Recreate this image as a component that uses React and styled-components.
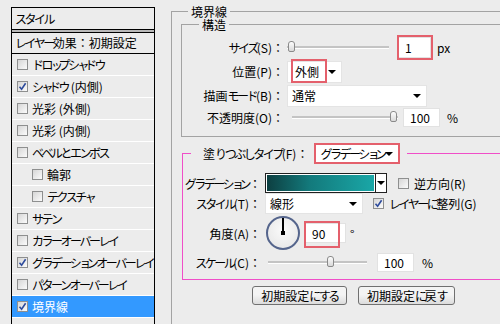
import React from "react";
import styled, { createGlobalStyle } from "styled-components";

const GlobalStyle = createGlobalStyle`
  body {
    margin: 0;
    background: #ececec;
    font-family: "Noto Sans CJK JP", "Noto Sans", sans-serif;
    font-size: 12px;
    color: #000;
  }
`;

const Screen = styled.div`
  display: flex;
  width: 500px;
  height: 324px;
  overflow: hidden;
  background: #ececec;
`;

// the UI font packs kana tighter than full-width CJK fonts do
const Kana = styled.span`
  letter-spacing: ${({ $small }) => ($small ? -4.5 : -2.5)}px;
`;

const SMALL = "ぁぃぅぇぉっゃゅょァィゥェォッャュョ";
const kindOf = (ch) =>
  SMALL.includes(ch) ? "small" : /[ぁ-んァ-ヶー]/.test(ch) ? "kana" : "other";

function Jp({ children }) {
  const runs = [];
  for (const ch of String(children)) {
    const k = kindOf(ch);
    const last = runs[runs.length - 1];
    if (last && last.k === k) last.t += ch;
    else runs.push({ k, t: ch });
  }
  return runs.map((r, i) =>
    r.k === "other" ? (
      <React.Fragment key={i}>{r.t}</React.Fragment>
    ) : (
      <Kana key={i} $small={r.k === "small"}>
        {r.t}
      </Kana>
    )
  );
}

/* ---------- left: style list ---------- */

const StylePanel = styled.div`
  flex: none;
  width: 142px;
  margin: 7px 0 0 11px;
  border: 1px solid #000;
  border-bottom: none;
  display: flex;
  flex-direction: column;
`;

const PanelTitle = styled.div`
  height: 21px;
  line-height: 21px;
  padding-left: 3px;
  border-bottom: 1px solid #000;
`;

const TitleGap = styled.div`
  height: 2px;
  background: #b9b9b9;
  border-bottom: 1px solid #000;
`;

const Preset = styled.div`
  height: 20px;
  line-height: 20px;
  padding-left: 3px;
  border-bottom: 1px solid #000;
`;

const EffectRow = styled.div`
  display: flex;
  align-items: center;
  gap: 4px;
  height: 21px;
  padding-left: ${({ $indent }) => ($indent ? 20 : 5)}px;
  border-bottom: 1px solid #fff;
  background: ${({ $active }) => ($active ? "#3399ff" : "transparent")};
  color: ${({ $active }) => ($active ? "#fff" : "#000")};
  white-space: nowrap;
  overflow: hidden;
`;

/* ---------- common controls ---------- */

const Box = styled.span`
  flex: none;
  display: inline-flex;
  align-items: center;
  justify-content: center;
  width: 11px;
  height: 11px;
  box-sizing: border-box;
  border: 1px solid #8e8f8f;
  background: linear-gradient(135deg, #d6d6d6, #fbfbfb);
`;

function Checkbox({ checked }) {
  return (
    <Box>
      {checked && (
        <svg width="9" height="9" viewBox="0 0 9 9">
          <path d="M1.5 4.8 L3.6 7.2 L7.6 1.2" stroke="#2d4b9c" strokeWidth="1.6" fill="none" />
        </svg>
      )}
    </Box>
  );
}

const Track = styled.div`
  flex: none;
  position: relative;
  width: ${({ $w }) => $w}px;
  height: 2px;
  background: #c4c4c4;
  border-bottom: 1px solid #fff;
`;

const Thumb = styled.span`
  position: absolute;
  top: -5px;
  left: ${({ $at }) => $at}px;
  width: 7px;
  height: 11px;
  box-sizing: border-box;
  border: 1px solid #8a8a8a;
  border-radius: 3px 3px 2px 2px;
  background: linear-gradient(#fdfdfd, #d9d9d9);
`;

const NumField = styled.span`
  flex: none;
  position: relative;
  display: inline-flex;
  align-items: center;
  width: ${({ $w }) => $w}px;
  height: ${({ $h }) => $h || 19}px;
  box-sizing: border-box;
  padding-left: 6px;
  background: #fff;
  border: 1px solid #e2e2e2;

  ${({ $mark }) =>
    $mark &&
    `&::after {
      content: "";
      position: absolute;
      left: -2px;
      top: -3px;
      width: ${$mark[0]}px;
      height: ${$mark[1]}px;
      border: 2px solid #e4606c;
      box-sizing: border-box;
    }`}
`;

const SelectBox = styled.span`
  flex: none;
  display: inline-flex;
  align-items: center;
  justify-content: space-between;
  width: ${({ $w }) => $w}px;
  height: ${({ $h }) => $h || 22}px;
  box-sizing: border-box;
  padding: 0 5px 0 4px;
  background: #fff;
  border: ${({ $red }) => ($red ? "2px solid #e4606c" : "1px solid #e4e4e4")};
  white-space: nowrap;
`;

const Arrow = styled.span`
  flex: none;
  width: 0;
  height: 0;
  border-left: 4px solid transparent;
  border-right: 4px solid transparent;
  border-top: 4px solid #000;
`;

const MarkedText = styled.span`
  display: inline-flex;
  align-items: center;
  height: 24px;
  margin: -1px 0 0 -1px;
  padding: 0 6px 0 2px;
  border: 2px solid #e4606c;
  box-sizing: border-box;
`;

const Unit = styled.span`
  margin-left: 6px;
`;

/* ---------- right: stroke settings ---------- */

const Settings = styled.div`
  flex: none;
  margin-left: 16px;
`;

const Group = styled.fieldset`
  margin: 5px 0 0;
  padding: 0 0 40px 9px;
  width: 380px;
  border: 1px solid #a3a3a3;
  border-right: none;
`;

const Legend = styled.legend`
  margin-left: ${({ $offset }) => $offset}px;
  padding: 0 3px;
  line-height: 13px;
`;

const SubGroup = styled.fieldset`
  margin: 0;
  padding: 4px 0 8px 0;
  border: 1px solid #a3a3a3;
  border-right: none;
`;

const FormGrid = styled.div`
  display: grid;
  grid-template-columns: ${({ $label }) => $label}px auto;
  grid-template-rows: ${({ $rows }) => $rows};
  column-gap: ${({ $gap }) => $gap}px;
  align-items: center;
`;

const Label = styled.span`
  text-align: right;
  white-space: nowrap;
`;

const Control = styled.div`
  display: flex;
  align-items: center;
  gap: ${({ $gap }) => $gap || 0}px;
  white-space: nowrap;
`;

const FillGroup = styled.fieldset`
  margin: 6px 0 0 1px;
  padding: 9px 0 7px 0;
  border: 1px solid #f04ec8;
  border-right: none;
`;

const FillLegend = styled.legend`
  display: flex;
  align-items: center;
  gap: 6px;
  margin-left: 8px;
  padding: 0 7px 0 12px;
`;

const Swatch = styled.span`
  flex: none;
  display: flex;
  width: 122px;
  height: 20px;
  box-sizing: border-box;
  border: 1px solid #202020;
  background: #fff;
`;

const SwatchFill = styled.span`
  flex: 1;
  margin: 1px;
  background: linear-gradient(90deg, #0d3f41, #137a7c 40%, #1aa7a7);
`;

const SwatchArrow = styled.span`
  flex: none;
  width: 10px;
  display: flex;
  align-items: center;
  justify-content: center;
  border-left: 1px solid #202020;
`;

const CheckLabel = styled.span`
  display: inline-flex;
  align-items: center;
  gap: 5px;
`;

const Dial = styled.span`
  flex: none;
  position: relative;
  width: 34px;
  height: 34px;
  margin-left: 1px;
  box-sizing: border-box;
  border-radius: 50%;
  border: 2px solid #55658c;
  background: radial-gradient(circle at 50% 40%, #fafafa, #e4e4e4);
`;

const DialHand = styled.span`
  position: absolute;
  left: 14px;
  top: 0;
  width: 2px;
  height: 15px;
  background: #000;

  &::after {
    content: "";
    position: absolute;
    left: -1px;
    bottom: -2px;
    width: 4px;
    height: 4px;
    background: #000;
  }
`;

const ButtonRow = styled.div`
  display: flex;
  gap: 11px;
  margin-top: 6px;
  padding-left: 71px;
`;

const Button = styled.button`
  width: ${({ $w }) => $w}px;
  height: 19px;
  padding: 0;
  font: inherit;
  font-size: 12px;
  line-height: 17px;
  color: #000;
  border: 1px solid #707070;
  border-radius: 3px;
  background: linear-gradient(#f4f4f4 45%, #dcdcdc);
`;

const effects = [
  { label: "ドロップシャドウ" },
  { label: "シャドウ (内側)", checked: true },
  { label: "光彩 (外側)" },
  { label: "光彩 (内側)" },
  { label: "ベベルとエンボス" },
  { label: "輪郭", indent: true },
  { label: "テクスチャ", indent: true },
  { label: "サテン" },
  { label: "カラーオーバーレイ" },
  { label: "グラデーションオーバーレイ", checked: true },
  { label: "パターンオーバーレイ" },
  { label: "境界線", checked: true, active: true },
];

export default function App() {
  return (
    <Screen>
      <GlobalStyle />
      <StylePanel>
        <PanelTitle>
          <Jp>スタイル</Jp>
        </PanelTitle>
        <TitleGap />
        <Preset>
          <Jp>レイヤー効果：初期設定</Jp>
        </Preset>
        {effects.map((e) => (
          <EffectRow key={e.label} $indent={e.indent} $active={e.active}>
            <Checkbox checked={e.checked} />
            <span>
              <Jp>{e.label}</Jp>
            </span>
          </EffectRow>
        ))}
      </StylePanel>

      <Settings>
        <Group>
          <Legend $offset={7}>境界線</Legend>
          <SubGroup>
            <Legend $offset={17}>構造</Legend>
            <FormGrid $label={102} $gap={3} $rows="24px 25px 23px 21px">
              <Label>
                <Jp>サイズ(S)：</Jp>
              </Label>
              <Control>
                <Track $w={102}>
                  <Thumb $at={1} />
                </Track>
                <NumField $w={33} $h={21} $mark={[36, 25]} style={{ marginLeft: 9 }}>
                  1
                </NumField>
                <Unit>px</Unit>
              </Control>

              <Label>位置(P)：</Label>
              <Control>
                <SelectBox $w={55}>
                  <MarkedText>外側</MarkedText>
                  <Arrow />
                </SelectBox>
              </Control>

              <Label>
                <Jp>描画モード(B)：</Jp>
              </Label>
              <Control>
                <SelectBox $w={140}>
                  通常
                  <Arrow />
                </SelectBox>
              </Control>

              <Label>不透明度(O)：</Label>
              <Control $gap={5}>
                <Track $w={106} style={{ marginLeft: 5 }}>
                  <Thumb $at={98} />
                </Track>
                <NumField $w={37}>100</NumField>
                <Unit style={{ marginLeft: 2 }}>%</Unit>
              </Control>
            </FormGrid>
          </SubGroup>

          <FillGroup>
            <FillLegend>
              <span>
                <Jp>塗りつぶしタイプ(F)：</Jp>
              </span>
              <SelectBox $w={86} $h={21} $red>
                <span>
                  <Jp>グラデーション</Jp>
                </span>
                <Arrow />
              </SelectBox>
            </FillLegend>
            <FormGrid $label={78} $gap={4} $rows="20px 21px 38px 20px">
              <Label>
                <Jp>グラデーション：</Jp>
              </Label>
              <Control $gap={11}>
                <Swatch>
                  <SwatchFill />
                  <SwatchArrow>
                    <Arrow />
                  </SwatchArrow>
                </Swatch>
                <CheckLabel>
                  <Checkbox />
                  逆方向(R)
                </CheckLabel>
              </Control>

              <Label>
                <Jp>スタイル(T)：</Jp>
              </Label>
              <Control $gap={10}>
                <SelectBox $w={98} $h={21}>
                  線形
                  <Arrow />
                </SelectBox>
                <CheckLabel>
                  <Checkbox checked />
                  <span>
                    <Jp>レイヤーに整列(G)</Jp>
                  </span>
                </CheckLabel>
              </Control>

              <Label>角度(A)：</Label>
              <Control $gap={4}>
                <Dial>
                  <DialHand />
                </Dial>
                <NumField $w={41} $h={20} $mark={[36, 27]} style={{ marginLeft: 1 }}>
                  90
                </NumField>
                <span>°</span>
              </Control>

              <Label>
                <Jp>スケール(C)：</Jp>
              </Label>
              <Control $gap={10}>
                <Track $w={99} style={{ marginLeft: 3 }}>
                  <Thumb $at={59} />
                </Track>
                <NumField $w={37}>100</NumField>
                <Unit style={{ marginLeft: -2 }}>%</Unit>
              </Control>
            </FormGrid>
          </FillGroup>

          <ButtonRow>
            <Button $w={95}>
              <Jp>初期設定にする</Jp>
            </Button>
            <Button $w={97}>
              <Jp>初期設定に戻す</Jp>
            </Button>
          </ButtonRow>
        </Group>
      </Settings>
    </Screen>
  );
}
